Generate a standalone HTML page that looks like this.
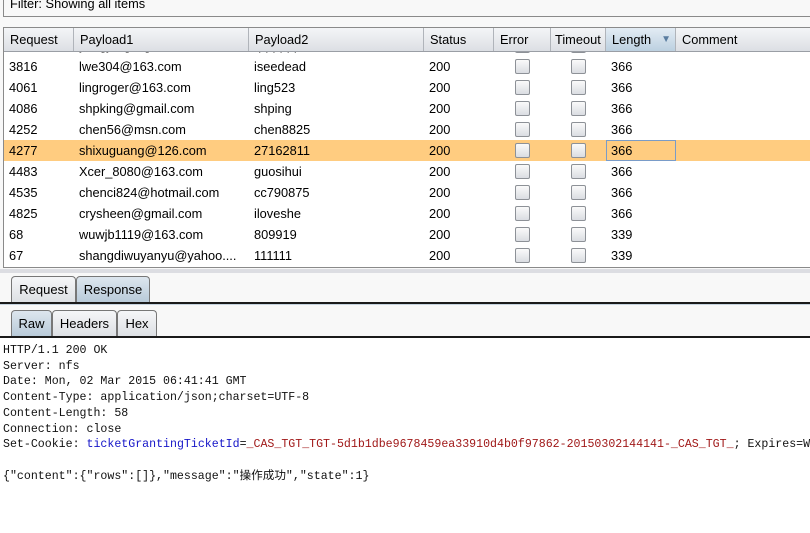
<!DOCTYPE html>
<html><head><meta charset="utf-8"><style>
*{margin:0;padding:0;box-sizing:border-box}
body{width:810px;height:533px;background:#f8f8f8;position:relative;overflow:hidden;font-family:"Liberation Sans",Arial,sans-serif;font-size:12.8px;color:#000}
.abs{position:absolute}
.filter{left:3px;top:-9px;width:820px;height:26px;border:1px solid #8a8a8a;background:#f8f8f8;padding:4px 6px;font-size:12.8px}
.tbl{left:3px;top:27px;width:820px;height:241px;border:1px solid #8a8a8a;background:#fff;overflow:hidden}
.hdr{position:absolute;left:0;top:0;height:24px;width:820px;background:linear-gradient(#f4f5f7,#dcdfe4);border-bottom:1px solid #9a9ea5}
.hc{position:absolute;top:0;height:23px;line-height:23px;padding-left:6px;border-right:1px solid #b0b4ba}
.row{position:absolute;left:0;width:820px;height:21px;line-height:21px}
.c{position:absolute;top:0;padding-left:5px;white-space:nowrap}
.cb{position:absolute;top:3px;width:15px;height:15px;border:1px solid #8d9197;border-radius:2px;background:linear-gradient(#fafafa,#dadde2)}
.sel{background:#ffcc80}
.tab{position:absolute;height:27px;line-height:25px;text-align:center;border:1px solid #777;border-bottom:none;border-radius:4px 4px 0 0;background:linear-gradient(#f5f6f8,#dcdfe3);font-size:13px}
.tab.on{background:linear-gradient(#dde6ee,#b7c9d8)}
.line{left:0;width:810px;height:2px;background:#1a1a1a}
pre{position:absolute;left:3px;top:343px;font-family:"Liberation Mono","Noto Sans CJK SC",monospace;font-size:11.6px;line-height:15.7px;color:#111;white-space:pre}
.b{color:#1515c8}.r{color:#a01818}
</style></head><body>
<div class="abs filter">Filter: Showing all items</div>
<div class="abs tbl">
 <div class="hdr">
  <div class="hc" style="left:0;width:70px">Request</div>
  <div class="hc" style="left:70px;width:175px">Payload1</div>
  <div class="hc" style="left:245px;width:175px">Payload2</div>
  <div class="hc" style="left:420px;width:70px">Status</div>
  <div class="hc" style="left:490px;width:57px">Error</div>
  <div class="hc" style="left:547px;width:55px;padding-left:4px">Timeout</div>
  <div class="hc" style="left:602px;width:70px;background:linear-gradient(#e3ecf4,#bcd0e0)">Length<span style="position:absolute;right:4px;color:#5a7da0;font-size:10px">▼</span></div>
  <div class="hc" style="left:672px;width:150px;border:none">Comment</div>
 </div>
</div>
<div class="abs" style="left:4px;top:52px;width:806px;height:215px;overflow:hidden">
<div class="row" style="top:-17px"><span class="c" style="left:0">4014</span><span class="c" style="left:70px">yangjung@gmail.com</span><span class="c" style="left:245px">qqqqqq</span><span class="c" style="left:420px">200</span><span class="cb" style="left:511px"></span><span class="cb" style="left:567px"></span><span class="c" style="left:602px">366</span></div>
<div class="row" style="top:4px"><span class="c" style="left:0">3816</span><span class="c" style="left:70px">lwe304@163.com</span><span class="c" style="left:245px">iseedead</span><span class="c" style="left:420px">200</span><span class="cb" style="left:511px"></span><span class="cb" style="left:567px"></span><span class="c" style="left:602px">366</span></div>
<div class="row" style="top:25px"><span class="c" style="left:0">4061</span><span class="c" style="left:70px">lingroger@163.com</span><span class="c" style="left:245px">ling523</span><span class="c" style="left:420px">200</span><span class="cb" style="left:511px"></span><span class="cb" style="left:567px"></span><span class="c" style="left:602px">366</span></div>
<div class="row" style="top:46px"><span class="c" style="left:0">4086</span><span class="c" style="left:70px">shpking@gmail.com</span><span class="c" style="left:245px">shping</span><span class="c" style="left:420px">200</span><span class="cb" style="left:511px"></span><span class="cb" style="left:567px"></span><span class="c" style="left:602px">366</span></div>
<div class="row" style="top:67px"><span class="c" style="left:0">4252</span><span class="c" style="left:70px">chen56@msn.com</span><span class="c" style="left:245px">chen8825</span><span class="c" style="left:420px">200</span><span class="cb" style="left:511px"></span><span class="cb" style="left:567px"></span><span class="c" style="left:602px">366</span></div>
<div class="row sel" style="top:88px"><span class="c" style="left:0">4277</span><span class="c" style="left:70px">shixuguang@126.com</span><span class="c" style="left:245px">27162811</span><span class="c" style="left:420px">200</span><span class="cb" style="left:511px"></span><span class="cb" style="left:567px"></span><span class="c" style="left:602px;width:70px;height:21px;border:1px solid #7a9cc8;padding-left:4px;line-height:19px">366</span></div>
<div class="row" style="top:109px"><span class="c" style="left:0">4483</span><span class="c" style="left:70px">Xcer_8080@163.com</span><span class="c" style="left:245px">guosihui</span><span class="c" style="left:420px">200</span><span class="cb" style="left:511px"></span><span class="cb" style="left:567px"></span><span class="c" style="left:602px">366</span></div>
<div class="row" style="top:130px"><span class="c" style="left:0">4535</span><span class="c" style="left:70px">chenci824@hotmail.com</span><span class="c" style="left:245px">cc790875</span><span class="c" style="left:420px">200</span><span class="cb" style="left:511px"></span><span class="cb" style="left:567px"></span><span class="c" style="left:602px">366</span></div>
<div class="row" style="top:151px"><span class="c" style="left:0">4825</span><span class="c" style="left:70px">crysheen@gmail.com</span><span class="c" style="left:245px">iloveshe</span><span class="c" style="left:420px">200</span><span class="cb" style="left:511px"></span><span class="cb" style="left:567px"></span><span class="c" style="left:602px">366</span></div>
<div class="row" style="top:172px"><span class="c" style="left:0">68</span><span class="c" style="left:70px">wuwjb1119@163.com</span><span class="c" style="left:245px">809919</span><span class="c" style="left:420px">200</span><span class="cb" style="left:511px"></span><span class="cb" style="left:567px"></span><span class="c" style="left:602px">339</span></div>
<div class="row" style="top:193px"><span class="c" style="left:0">67</span><span class="c" style="left:70px">shangdiwuyanyu@yahoo....</span><span class="c" style="left:245px">111111</span><span class="c" style="left:420px">200</span><span class="cb" style="left:511px"></span><span class="cb" style="left:567px"></span><span class="c" style="left:602px">339</span></div>
</div>
<div class="abs" style="left:0;top:269px;width:810px;height:4px;background:#dcdde2"></div>
<div class="tab" style="left:11px;top:276px;width:65px">Request</div>
<div class="tab on" style="left:76px;top:276px;width:74px">Response</div>
<div class="abs line" style="top:302px"></div>
<div class="abs" style="left:0;top:304px;width:810px;height:1px;background:#c5d3df"></div>
<div class="tab on" style="left:11px;top:310px;width:41px">Raw</div>
<div class="tab" style="left:52px;top:310px;width:65px">Headers</div>
<div class="tab" style="left:117px;top:310px;width:40px">Hex</div>
<div class="abs line" style="top:336px"></div>
<div class="abs" style="left:0;top:338px;width:810px;height:195px;background:#fff"></div>
<pre>HTTP/1.1 200 OK
Server: nfs
Date: Mon, 02 Mar 2015 06:41:41 GMT
Content-Type: application/json;charset=UTF-8
Content-Length: 58
Connection: close
Set-Cookie: <span class="b">ticketGrantingTicketId</span>=<span class="r">_CAS_TGT_TGT-5d1b1dbe9678459ea33910d4b0f97862-20150302144141-_CAS_TGT_</span>; Expires=W

{"content":{"rows":[]},"message":"操作成功","state":1}</pre>
</body></html>
